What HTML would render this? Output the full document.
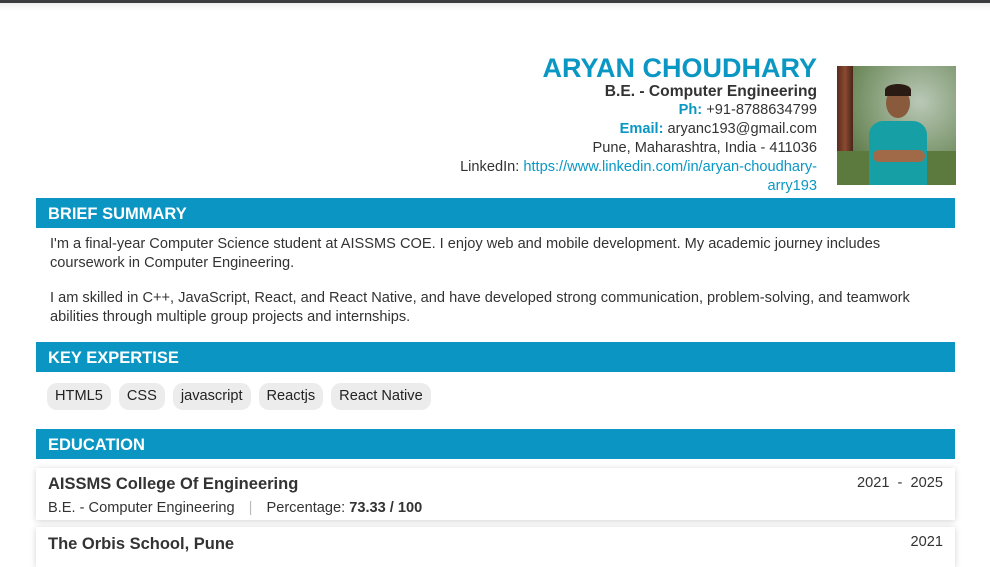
<!DOCTYPE html>
<html><head><meta charset="utf-8"><style>
*{margin:0;padding:0;box-sizing:border-box}
body{width:990px;height:556px;overflow:hidden;background:#fff;font-family:"Liberation Sans",sans-serif;color:#333;position:relative}
.top{position:absolute;left:0;top:0;width:990px;height:3px;background:#3a3b3d}
.topsh{position:absolute;left:0;top:3px;width:990px;height:8px;background:linear-gradient(#eee,#fff)}
.hdr{position:absolute;right:173px;top:53px;text-align:right;font-size:14.6px;line-height:19px}
.name{font-size:27px;font-weight:bold;color:#0a97c4;line-height:30px}
.sub{font-size:15.6px;font-weight:bold;color:#333;line-height:18px}
.b{color:#0a97c4;font-weight:bold}
.lnk{color:#0a97c4}
.photo{position:absolute;left:837px;top:66px;width:119px;height:119px;overflow:hidden;background:radial-gradient(ellipse at 70% 30%,#b9c8b6,#6e8a5c 60%,#3c5430)}
.bar{position:absolute;left:36px;width:919px;height:30px;background:#0a95c3;color:#fff;font-weight:bold;font-size:16.5px;padding:7px 12px;line-height:18px}
.txt{position:absolute;left:50px;width:895px;font-size:14.6px;line-height:19px;color:#333}
.chips{position:absolute;left:47px;top:383px}
.chip{display:inline-block;background:#ececec;border-radius:10px;padding:4px 8px;font-size:14.6px;line-height:19px;margin-right:8px;color:#222}
.card{position:absolute;left:36px;width:919px;background:#fff;box-shadow:0 1px 6px rgba(0,0,0,.18);padding:0 12px}
.ct{font-size:16.5px;font-weight:bold;color:#333}
</style></head><body>
<div class="top"></div><div class="topsh"></div>
<div class="hdr">
<div class="name">ARYAN CHOUDHARY</div>
<div class="sub">B.E. - Computer Engineering</div>
<div><span class="b">Ph:</span> +91-8788634799</div>
<div><span class="b">Email:</span> aryanc193@gmail.com</div>
<div>Pune, Maharashtra, India - 411036</div>
<div>LinkedIn: <span class="lnk">https://www.linkedin.com/in/aryan-choudhary-</span></div>
<div class="lnk">arry193</div>
</div>
<div class="photo">
<div style="position:absolute;left:0;top:0;width:16px;height:119px;background:linear-gradient(90deg,#5a2b1e,#8a4a30,#4a2418)"></div>
<div style="position:absolute;left:0;top:85px;width:119px;height:34px;background:#5d7a3e"></div>
<div style="position:absolute;left:49px;top:22px;width:24px;height:30px;border-radius:50%;background:#8a5a3c"></div>
<div style="position:absolute;left:48px;top:18px;width:26px;height:12px;border-radius:50% 50% 0 0;background:#2a1c14"></div>
<div style="position:absolute;left:32px;top:55px;width:58px;height:64px;border-radius:14px 14px 0 0;background:#16a0a6"></div>
<div style="position:absolute;left:36px;top:84px;width:52px;height:12px;background:#a06a48;border-radius:6px"></div>
</div>
<div class="bar" style="top:198px">BRIEF SUMMARY</div>
<div class="txt" style="top:235px">I'm a final-year Computer Science student at AISSMS COE. I enjoy web and mobile development. My academic journey includes coursework in Computer Engineering.</div>
<div class="txt" style="top:289px">I am skilled in C++, JavaScript, React, and React Native, and have developed strong communication, problem-solving, and teamwork abilities through multiple group projects and internships.</div>
<div class="bar" style="top:342px">KEY EXPERTISE</div>
<div class="chips"><span class="chip">HTML5</span><span class="chip">CSS</span><span class="chip">javascript</span><span class="chip">Reactjs</span><span class="chip">React Native</span></div>
<div class="bar" style="top:429px">EDUCATION</div>
<div class="card" style="top:468px;height:52px">
<div class="ct" style="position:absolute;top:7px;left:12px">AISSMS College Of Engineering</div>
<div style="position:absolute;top:7px;right:12px;font-size:14.6px">2021 &nbsp;- &nbsp;2025</div>
<div style="position:absolute;top:32px;left:12px;font-size:14.6px">B.E. - Computer Engineering <span style="color:#bbb;margin:0 10px">|</span> Percentage: <b>73.33 / 100</b></div>
</div>
<div class="card" style="top:527px;height:40px">
<div class="ct" style="position:absolute;top:8px;left:12px">The Orbis School, Pune</div>
<div style="position:absolute;top:7px;right:12px;font-size:14.6px">2021</div>
</div>
</body></html>
